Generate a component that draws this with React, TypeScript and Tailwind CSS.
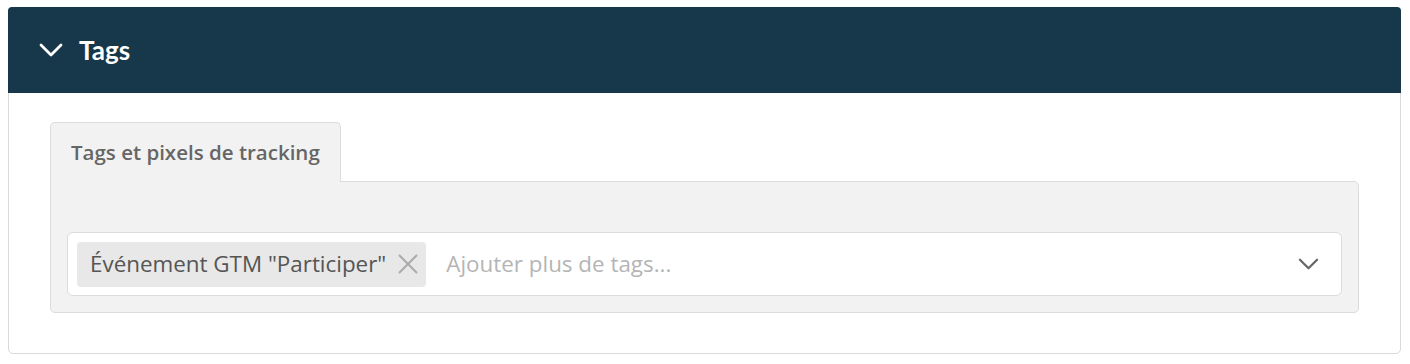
function Chevron({ className, stroke }: { className: string; stroke: number }) {
  return (
    <svg viewBox="0 0 24 14" fill="none" className={className}>
      <polyline
        points="2,2 12,12 22,2"
        stroke="currentColor"
        strokeWidth={stroke}
        strokeLinecap="round"
        strokeLinejoin="round"
      />
    </svg>
  );
}

export default function App() {
  return (
    <div className="min-h-screen bg-white pt-[7px] pl-[8px] pr-[9px]">
      <section className="rounded-[5px] border border-[#d9d9d9] bg-white">
        <header className="-mx-px -mt-px flex h-[86px] items-center gap-[16px] rounded-t-[4px] bg-[#17384b] pl-[31px] text-white">
          <Chevron className="h-[14px] w-[24px]" stroke={2.8} />
          <h2 className="text-[26px] font-bold [font-family:Lato,sans-serif]">Tags</h2>
        </header>

        <div className="px-[41px] pt-[29px] pb-[40px]">
          <div className="flex">
            <div className="relative z-10 -mb-px flex h-[60px] items-center rounded-t-[5px] border border-b-0 border-[#dcdcdc] bg-[#f2f2f2] px-[20px] text-[20.5px] font-semibold text-[#666] [font-family:'Open_Sans',sans-serif]">
              Tags et pixels de tracking
            </div>
          </div>

          <div className="rounded-b-[5px] rounded-tr-[5px] border border-[#dcdcdc] bg-[#f2f2f2] px-[16px] pt-[50px] pb-[16px]">
            <div className="flex h-[64px] items-center gap-[20px] rounded-[6px] border border-[#dcdcdc] bg-white pl-[9px] pr-[22px] [font-family:'Open_Sans',sans-serif]">
              <span className="flex h-[45px] items-center gap-[12px] rounded-[4px] bg-[#e8e8e8] pl-[13px] pr-[8px] text-[22.4px] text-[#555]">
                Événement GTM "Participer"
                <svg viewBox="0 0 20 20" className="h-[20px] w-[20px] text-[#aaa]" fill="none">
                  <path d="M1 1 L19 19 M19 1 L1 19" stroke="currentColor" strokeWidth={2} />
                </svg>
              </span>
              <span className="flex-1 text-[22.4px] text-[#b5b5b5]">Ajouter plus de tags...</span>
              <Chevron className="h-[12px] w-[21px] text-[#666]" stroke={2.6} />
            </div>
          </div>
        </div>
      </section>
    </div>
  );
}
